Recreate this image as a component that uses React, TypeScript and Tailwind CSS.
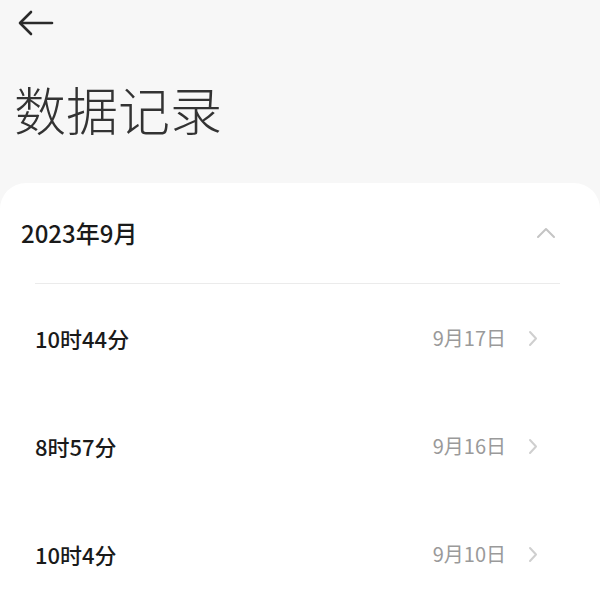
import React from 'react'

const rows = [
  { time: '10时44分', date: '9月17日' },
  { time: '8时57分', date: '9月16日' },
  { time: '10时4分', date: '9月10日' },
]

const font = { fontFamily: '"Noto Sans CJK SC", "Noto Sans", sans-serif' }

export default function App() {
  return (
    <div className="w-[600px] h-[604px] overflow-hidden bg-[#f7f7f7] flex flex-col" style={font}>
      {/* top bar */}
      <div className="h-[46px] shrink-0 flex items-center pl-[18px]">
        <svg width="36" height="26" viewBox="0 0 36 26" fill="none" stroke="#2a2a2a" strokeWidth="2.6" strokeLinecap="round" strokeLinejoin="round">
          <path d="M34 13H3" />
          <path d="M13 2L2 13l11 11" />
        </svg>
      </div>

      <div className="h-[137px] shrink-0 pl-[14px] pt-[31px]">
        <h1 className="text-[52px] leading-[64px] font-light text-[#333]">数据记录</h1>
      </div>

      {/* records card */}
      <div className="flex-1 shrink-0 bg-white rounded-t-[26px]">
        <div className="h-[100px] flex items-center justify-between pl-[21px] pr-[44px]">
          <span className="text-[24px] font-medium text-[#1a1a1a]">2023年9月</span>
          <svg width="20" height="12" viewBox="0 0 20 12" fill="none" stroke="#c4c4c4" strokeWidth="2" strokeLinecap="round" strokeLinejoin="round">
            <path d="M2 10l8-8 8 8" />
          </svg>
        </div>
        <div className="ml-[35px] mr-[40px] h-px bg-[#ebebeb]" />
        {rows.map(r => (
          <div key={r.time} className="h-[108px] flex items-center justify-between pl-[35px] pr-[62px]">
            <span className="text-[22px] font-medium text-[#1a1a1a]">{r.time}</span>
            <div className="flex items-center gap-[22px]">
              <span className="text-[20px] text-[#9a9a9a]">{r.date}</span>
              <svg width="10" height="17" viewBox="0 0 10 17" fill="none" stroke="#cfcfcf" strokeWidth="2" strokeLinecap="round" strokeLinejoin="round">
                <path d="M2 2l6 6.5L2 15" />
              </svg>
            </div>
          </div>
        ))}
      </div>
    </div>
  )
}
